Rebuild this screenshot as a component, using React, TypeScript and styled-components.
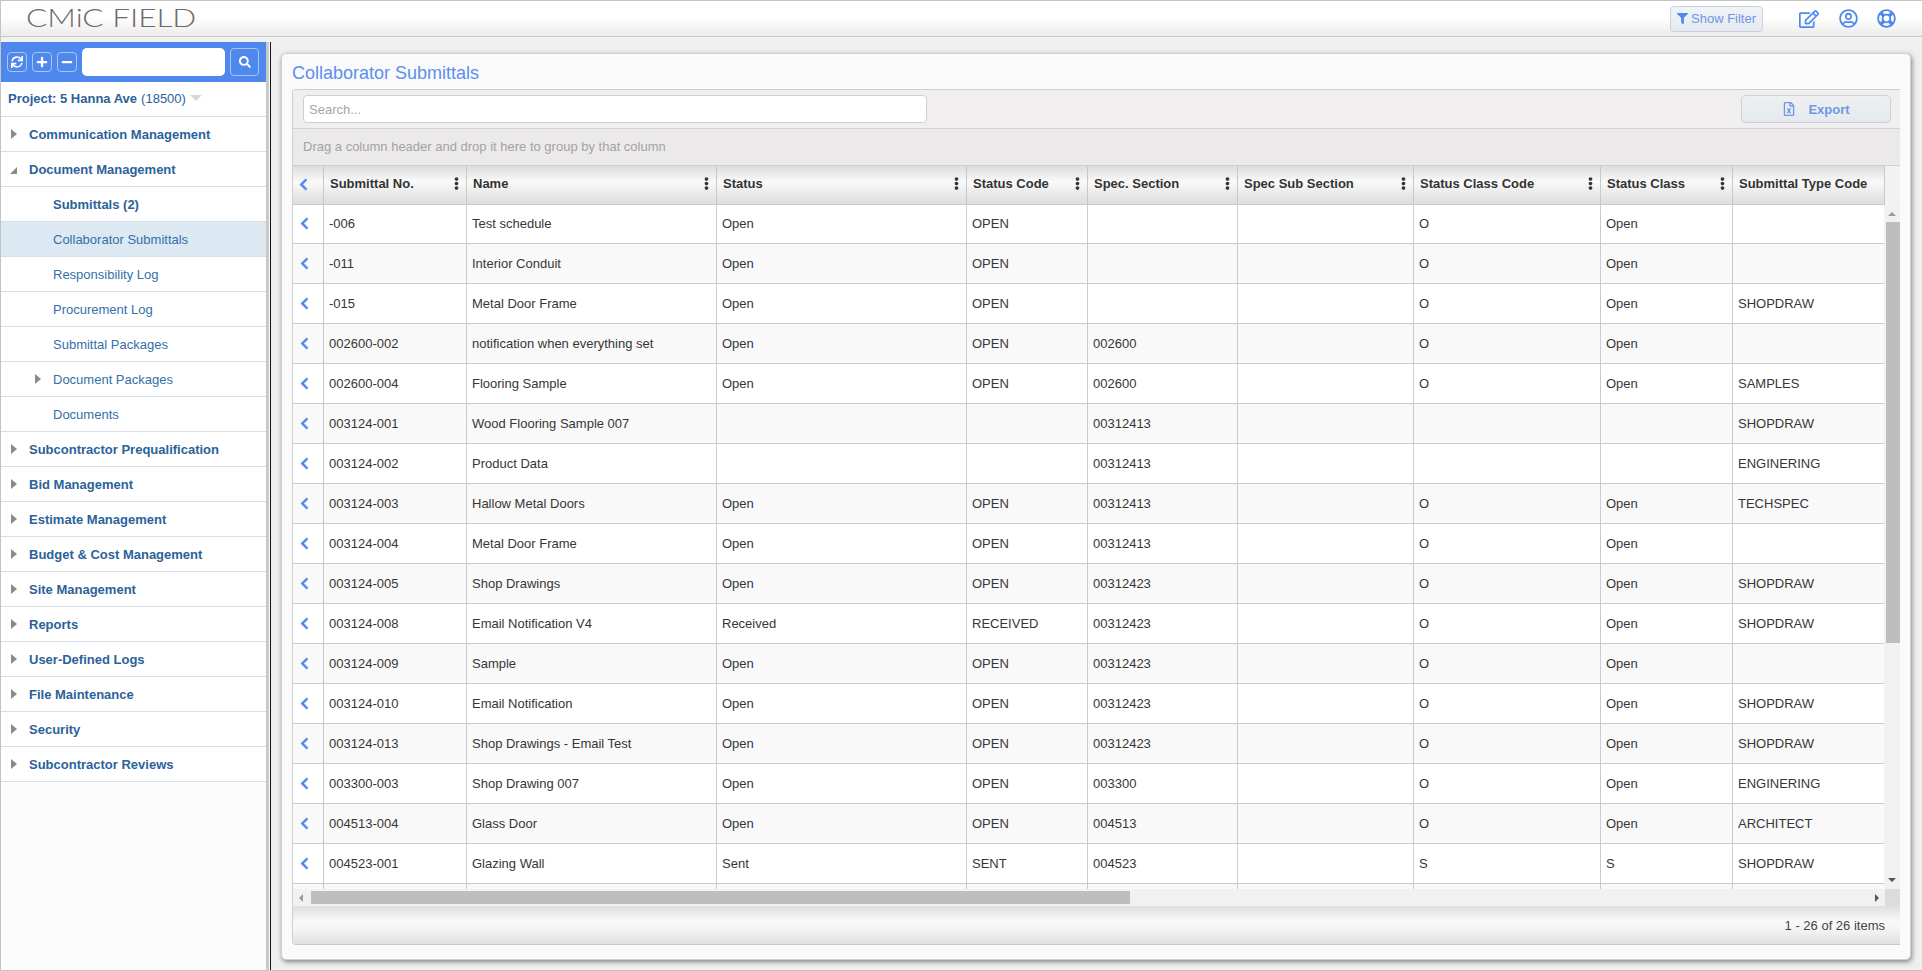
import React from 'react';
import styled, { createGlobalStyle } from 'styled-components';
import {
  FaChevronLeft,
  FaEllipsisV,
  FaFilter,
  FaMinus,
  FaPlus,
  FaRegEdit,
  FaRegFileExcel,
  FaRegLifeRing,
  FaRegUserCircle,
  FaSearch,
  FaSync,
} from 'react-icons/fa';

const blue = '#4f88ec';
const linkBlue = '#2b6299';
const columnWidths = '31px 143px 250px 250px 121px 150px 176px 187px 132px 152px';

const GlobalStyle = createGlobalStyle`
  html, body {
    margin: 0;
    padding: 0;
    height: 100%;
    overflow: hidden;
    background: #f0f0f0;
  }
  * {
    box-sizing: border-box;
  }
  body {
    font-family: "Liberation Sans", Arial, sans-serif;
    font-size: 13px;
    color: #333;
  }
`;

const Page = styled.div`
  display: flex;
  flex-direction: column;
  height: 971px;
  width: 1922px;
  border-top: 1px solid #c4c4c4;
  border-left: 1px solid #c4c4c4;
  border-bottom: 1px solid #c4c4c4;
`;

const Header = styled.header`
  display: flex;
  align-items: center;
  height: 36px;
  flex-shrink: 0;
  padding: 0 26px 0 25px;
  background: linear-gradient(#ffffff 0%, #ffffff 45%, #ebebeb 100%);
  border-bottom: 1px solid #c8c8c8;
`;

const Logo = styled.div`
  font-family: Lato, "Liberation Sans", sans-serif;
  font-weight: 300;
  font-size: 25px;
  line-height: 30px;
  padding-bottom: 4px;
  color: #6e6868;
  transform: scaleX(1.26);
  transform-origin: left center;
`;

const HeaderActions = styled.div`
  display: flex;
  align-items: center;
  margin-left: auto;
`;

const FilterButton = styled.button`
  display: flex;
  align-items: center;
  gap: 3px;
  width: 93px;
  height: 26px;
  margin-right: 36px;
  padding: 0 0 0 6px;
  font: 13px "Liberation Sans", Arial, sans-serif;
  color: #6f97e6;
  background: linear-gradient(#f0f3f7, #e6ebf1);
  border: 1px solid #c9d1dc;
  border-radius: 4px;
`;

const HeaderIcon = styled.span<{ $gap?: number; $size: number }>`
  display: flex;
  color: ${blue};
  font-size: ${p => p.$size}px;
  margin-left: ${p => p.$gap ?? 0}px;
`;

const Band = styled.div`
  height: 5px;
  flex-shrink: 0;
  background: #f1f1f1;
`;

const Body = styled.div`
  display: flex;
  flex: 1;
  min-height: 0;
`;

const Sidebar = styled.nav`
  width: 265px;
  flex-shrink: 0;
  background: #fcfcfc;
`;

const Splitter = styled.div`
  width: 5px;
  flex-shrink: 0;
  background: #fff;
  border-left: 3px solid #c9c9c9;
  border-right: 1px solid #111;
`;

const SideToolbar = styled.div`
  display: flex;
  align-items: center;
  height: 40px;
  padding: 0 6px;
  background: ${blue};
`;

const ToolButton = styled.button`
  display: flex;
  align-items: center;
  justify-content: center;
  width: 20px;
  height: 20px;
  margin-right: 5px;
  padding: 0;
  color: #fff;
  font-size: 12px;
  background: transparent;
  border: 1px solid #a9c5f4;
  border-radius: 4px;
`;

const SideSearch = styled.input`
  width: 143px;
  height: 28px;
  margin-right: 5px;
  background: #fff;
  border: 0;
  border-radius: 5px;
`;

const SideSearchButton = styled(ToolButton)`
  width: 29px;
  height: 28px;
  margin: 0;
  font-size: 12px;
`;

const ProjectRow = styled.div`
  display: flex;
  align-items: center;
  height: 35px;
  padding: 0 0 2px 7px;
  background: #fff;
  border-bottom: 1px solid #d9dfe6;
  color: ${linkBlue};
  font-size: 13px;
  font-weight: bold;
`;

const ProjectCode = styled.span`
  font-weight: normal;
  margin-left: 4px;
`;

const ProjectCaret = styled.span`
  margin-left: 4px;
  border-left: 6px solid transparent;
  border-right: 6px solid transparent;
  border-top: 6px solid #d3d8df;
`;

const TreeRow = styled.div<{ $level: number; $active?: boolean; $bold?: boolean }>`
  position: relative;
  display: flex;
  align-items: center;
  height: 35px;
  padding-left: ${p => (p.$level === 0 ? 28 : 52)}px;
  padding-top: 1px;
  background: ${p => (p.$active ? '#dce8f2' : '#fff')};
  border-bottom: 1px solid #d9dfe6;
  color: ${p => (p.$level === 0 || p.$bold ? linkBlue : '#3570a8')};
  font-size: 13px;
  font-weight: ${p => (p.$level === 0 || p.$bold ? 'bold' : 'normal')};
`;

const Closed = styled.span<{ $level: number }>`
  position: absolute;
  left: ${p => (p.$level === 0 ? 10 : 34)}px;
  top: 12px;
  border-top: 5px solid transparent;
  border-bottom: 5px solid transparent;
  border-left: 6px solid #8a8a8a;
`;

const Open = styled.span`
  position: absolute;
  left: 9px;
  top: 15px;
  border-left: 7px solid transparent;
  border-bottom: 7px solid #8a8a8a;
`;

const Main = styled.main`
  flex: 1;
  min-width: 0;
  padding: 11px 11px 10px 10px;
  background: #efefef;
`;

const Panel = styled.section`
  display: flex;
  flex-direction: column;
  height: 100%;
  padding: 0 10px 14px 10px;
  background: #fafafa;
  border: 1px solid #d0d0d0;
  border-radius: 5px;
  box-shadow: 1px 2px 5px rgba(0, 0, 0, 0.45);
`;

const Title = styled.h1`
  height: 35px;
  margin: 0;
  padding-top: 9px;
  font-size: 18px;
  font-weight: normal;
  line-height: 20px;
  color: #5c8ef0;
`;

const Grid = styled.div`
  display: flex;
  flex-direction: column;
  flex: 1;
  min-height: 0;
  border: 1px solid #cfcfcf;
  border-width: 1px 0 0 1px;
  border-radius: 4px 0 0 4px;
  overflow: hidden;
`;

const GridToolbar = styled.div`
  display: flex;
  align-items: center;
  justify-content: space-between;
  height: 39px;
  flex-shrink: 0;
  padding: 0 9px 0 10px;
  background: #f0eeee;
  border-bottom: 1px solid #d2d2d2;
`;

const SearchInput = styled.input`
  width: 624px;
  height: 28px;
  padding: 0 5px;
  font: 13px "Liberation Sans", Arial, sans-serif;
  background: #fff;
  border: 1px solid #cfcfcf;
  border-radius: 4px;
  &::placeholder {
    color: #a6a6a6;
  }
`;

const ExportButton = styled.button`
  display: flex;
  align-items: center;
  justify-content: center;
  gap: 12px;
  width: 150px;
  height: 28px;
  padding: 0;
  font: bold 13px "Liberation Sans", Arial, sans-serif;
  color: #6f97e6;
  background: linear-gradient(#eef0f2, #e6eaee);
  border: 1px solid #cdd1d6;
  border-radius: 4px;
  svg {
    font-size: 14px;
  }
`;

const GroupBar = styled.div`
  display: flex;
  align-items: center;
  height: 37px;
  flex-shrink: 0;
  padding: 0 0 2px 10px;
  background: #ebe9e9;
  border-bottom: 1px solid #cfcfcf;
  color: #a3a3a3;
  font-size: 13px;
`;

const HeaderStrip = styled.div`
  display: flex;
  flex-shrink: 0;
  height: 39px;
  background: #f2f2f2;
`;

const HeaderRow = styled.div`
  display: grid;
  grid-template-columns: ${columnWidths};
  height: 39px;
  background: linear-gradient(#dcdcdc 0%, #fafafa 42%, #e8e8e8 75%, #dedede 100%);
  border-bottom: 1px solid #c8c8c8;
`;

const HeaderCell = styled.div`
  position: relative;
  display: flex;
  align-items: center;
  padding: 0 0 3px 6px;
  border-right: 1px solid #c8c8c8;
  font-size: 13px;
  font-weight: bold;
  color: #333;
  white-space: nowrap;
`;

const ColumnMenu = styled.span`
  position: absolute;
  right: 3px;
  top: 11px;
  display: flex;
  font-size: 13px;
  color: #333;
`;

const Expander = styled.div<{ $head?: boolean }>`
  display: flex;
  align-items: center;
  justify-content: center;
  padding-right: ${p => (p.$head ? 10 : 8)}px;
  padding-bottom: ${p => (p.$head ? 2 : 0)}px;
  color: ${blue};
  font-size: 13px;
  border-right: 1px solid #c8c8c8;
  svg path {
    stroke: currentColor;
    stroke-width: 24;
  }
`;

const ScrollArea = styled.div`
  display: flex;
  flex: 1;
  min-height: 0;
`;

const Rows = styled.div`
  flex: 1;
  min-width: 0;
  overflow: hidden;
`;

const RowsTrack = styled.div`
  margin-top: -1px;
`;

const Row = styled.div<{ $alt: boolean }>`
  display: grid;
  grid-template-columns: ${columnWidths};
  height: 40px;
  background: ${p => (p.$alt ? '#f9f9f9' : '#fff')};
  border-bottom: 1px solid #cbcbcb;
`;

const Cell = styled.div`
  display: flex;
  align-items: center;
  padding: 0 0 1px 5px;
  border-right: 1px solid #cbcbcb;
  font-size: 13px;
  color: #363636;
  white-space: nowrap;
  overflow: hidden;
`;

const VScroll = styled.div`
  position: relative;
  width: 16px;
  flex-shrink: 0;
  background: #f1f1f1;
`;

const VThumb = styled.div`
  position: absolute;
  left: 2px;
  right: 0;
  top: 17px;
  height: 421px;
  background: #bebebe;
`;

const Arrow = styled.span<{ $dir: 'up' | 'down' | 'left' | 'right'; $tone: string }>`
  position: absolute;
  ${p =>
    p.$dir === 'up' || p.$dir === 'down'
      ? `
    left: 4px;
    border-left: 4px solid transparent;
    border-right: 4px solid transparent;
    ${p.$dir === 'up' ? 'top: 7px' : 'bottom: 7px'};
    border-${p.$dir === 'up' ? 'bottom' : 'top'}: 4px solid ${p.$tone};
  `
      : `
    top: 5px;
    border-top: 4px solid transparent;
    border-bottom: 4px solid transparent;
    ${p.$dir === 'left' ? 'left: 6px' : 'right: 6px'};
    border-${p.$dir === 'left' ? 'right' : 'left'}: 4px solid ${p.$tone};
  `}
`;

const HScrollRow = styled.div`
  display: flex;
  height: 17px;
  flex-shrink: 0;
`;

const HScroll = styled.div`
  position: relative;
  flex: 1;
  background: #f1f1f1;
`;

const HThumb = styled.div`
  position: absolute;
  left: 18px;
  top: 2px;
  width: 819px;
  height: 13px;
  background: #bebebe;
`;

const Corner = styled.div`
  width: 15px;
  background: #dcdcdc;
`;

const Footer = styled.div`
  display: flex;
  align-items: center;
  justify-content: flex-end;
  height: 39px;
  flex-shrink: 0;
  padding: 0 15px 0 0;
  background: linear-gradient(#dedede 0%, #fafafa 42%, #f0f0f0 70%, #dfdfdf 100%);
  border-bottom: 1px solid #c8c8c8;
  font-size: 13px;
  color: #444;
`;

const treeItems = [
  { label: 'Communication Management', level: 0, icon: 'closed' },
  { label: 'Document Management', level: 0, icon: 'open' },
  { label: 'Submittals (2)', level: 1, bold: true },
  { label: 'Collaborator Submittals', level: 1, active: true },
  { label: 'Responsibility Log', level: 1 },
  { label: 'Procurement Log', level: 1 },
  { label: 'Submittal Packages', level: 1 },
  { label: 'Document Packages', level: 1, icon: 'closed' },
  { label: 'Documents', level: 1 },
  { label: 'Subcontractor Prequalification', level: 0, icon: 'closed' },
  { label: 'Bid Management', level: 0, icon: 'closed' },
  { label: 'Estimate Management', level: 0, icon: 'closed' },
  { label: 'Budget & Cost Management', level: 0, icon: 'closed' },
  { label: 'Site Management', level: 0, icon: 'closed' },
  { label: 'Reports', level: 0, icon: 'closed' },
  { label: 'User-Defined Logs', level: 0, icon: 'closed' },
  { label: 'File Maintenance', level: 0, icon: 'closed' },
  { label: 'Security', level: 0, icon: 'closed' },
  { label: 'Subcontractor Reviews', level: 0, icon: 'closed' },
];

const columns = [
  'Submittal No.',
  'Name',
  'Status',
  'Status Code',
  'Spec. Section',
  'Spec Sub Section',
  'Status Class Code',
  'Status Class',
  'Submittal Type Code',
];

const rows = [
  ['-006', 'Test schedule', 'Open', 'OPEN', '', '', 'O', 'Open', ''],
  ['-011', 'Interior Conduit', 'Open', 'OPEN', '', '', 'O', 'Open', ''],
  ['-015', 'Metal Door Frame', 'Open', 'OPEN', '', '', 'O', 'Open', 'SHOPDRAW'],
  ['002600-002', 'notification when everything set', 'Open', 'OPEN', '002600', '', 'O', 'Open', ''],
  ['002600-004', 'Flooring Sample', 'Open', 'OPEN', '002600', '', 'O', 'Open', 'SAMPLES'],
  ['003124-001', 'Wood Flooring Sample 007', '', '', '00312413', '', '', '', 'SHOPDRAW'],
  ['003124-002', 'Product Data', '', '', '00312413', '', '', '', 'ENGINERING'],
  ['003124-003', 'Hallow Metal Doors', 'Open', 'OPEN', '00312413', '', 'O', 'Open', 'TECHSPEC'],
  ['003124-004', 'Metal Door Frame', 'Open', 'OPEN', '00312413', '', 'O', 'Open', ''],
  ['003124-005', 'Shop Drawings', 'Open', 'OPEN', '00312423', '', 'O', 'Open', 'SHOPDRAW'],
  ['003124-008', 'Email Notification V4', 'Received', 'RECEIVED', '00312423', '', 'O', 'Open', 'SHOPDRAW'],
  ['003124-009', 'Sample', 'Open', 'OPEN', '00312423', '', 'O', 'Open', ''],
  ['003124-010', 'Email Notification', 'Open', 'OPEN', '00312423', '', 'O', 'Open', 'SHOPDRAW'],
  ['003124-013', 'Shop Drawings - Email Test', 'Open', 'OPEN', '00312423', '', 'O', 'Open', 'SHOPDRAW'],
  ['003300-003', 'Shop Drawing 007', 'Open', 'OPEN', '003300', '', 'O', 'Open', 'ENGINERING'],
  ['004513-004', 'Glass Door', 'Open', 'OPEN', '004513', '', 'O', 'Open', 'ARCHITECT'],
  ['004523-001', 'Glazing Wall', 'Sent', 'SENT', '004523', '', 'S', 'S', 'SHOPDRAW'],
  ['', '', '', '', '', '', '', '', ''],
];

const App: React.FC = () => {
  return (
    <Page>
      <GlobalStyle />
      <Header>
        <Logo>CMiC FIELD</Logo>
        <HeaderActions>
          <FilterButton>
            <FaFilter size={11} color={blue} />
            Show Filter
          </FilterButton>
          <HeaderIcon $size={20}>
            <FaRegEdit />
          </HeaderIcon>
          <HeaderIcon $size={19} $gap={20}>
            <FaRegUserCircle />
          </HeaderIcon>
          <HeaderIcon $size={19} $gap={19}>
            <FaRegLifeRing />
          </HeaderIcon>
        </HeaderActions>
      </Header>
      <Band />
      <Body>
        <Sidebar>
          <SideToolbar>
            <ToolButton>
              <FaSync />
            </ToolButton>
            <ToolButton>
              <FaPlus />
            </ToolButton>
            <ToolButton>
              <FaMinus />
            </ToolButton>
            <SideSearch />
            <SideSearchButton>
              <FaSearch />
            </SideSearchButton>
          </SideToolbar>
          <ProjectRow>
            Project: 5 Hanna Ave
            <ProjectCode>(18500)</ProjectCode>
            <ProjectCaret />
          </ProjectRow>
          {treeItems.map(item => (
            <TreeRow key={item.label} $level={item.level} $active={item.active} $bold={item.bold}>
              {item.icon === 'closed' && <Closed $level={item.level} />}
              {item.icon === 'open' && <Open />}
              {item.label}
            </TreeRow>
          ))}
        </Sidebar>
        <Splitter />
        <Main>
          <Panel>
            <Title>Collaborator Submittals</Title>
            <Grid>
              <GridToolbar>
                <SearchInput placeholder="Search..." />
                <ExportButton>
                  <FaRegFileExcel />
                  Export
                </ExportButton>
              </GridToolbar>
              <GroupBar>Drag a column header and drop it here to group by that column</GroupBar>
              <HeaderStrip>
                <HeaderRow>
                  <Expander $head>
                    <FaChevronLeft />
                  </Expander>
                  {columns.map((column, index) => (
                    <HeaderCell key={column}>
                      {column}
                      {index < columns.length - 1 && (
                        <ColumnMenu>
                          <FaEllipsisV />
                        </ColumnMenu>
                      )}
                    </HeaderCell>
                  ))}
                </HeaderRow>
              </HeaderStrip>
              <ScrollArea>
                <Rows>
                  <RowsTrack>
                    {rows.map((row, rowIndex) => (
                      <Row key={rowIndex} $alt={rowIndex % 2 === 1}>
                        <Expander>{row[0] && <FaChevronLeft />}</Expander>
                        {row.map((value, cellIndex) => (
                          <Cell key={cellIndex}>{value}</Cell>
                        ))}
                      </Row>
                    ))}
                  </RowsTrack>
                </Rows>
                <VScroll>
                  <Arrow $dir="up" $tone="#9a9a9a" />
                  <VThumb />
                  <Arrow $dir="down" $tone="#555" />
                </VScroll>
              </ScrollArea>
              <HScrollRow>
                <HScroll>
                  <Arrow $dir="left" $tone="#9a9a9a" />
                  <HThumb />
                  <Arrow $dir="right" $tone="#555" />
                </HScroll>
                <Corner />
              </HScrollRow>
              <Footer>1 - 26 of 26 items</Footer>
            </Grid>
          </Panel>
        </Main>
      </Body>
    </Page>
  );
};

export default App;
